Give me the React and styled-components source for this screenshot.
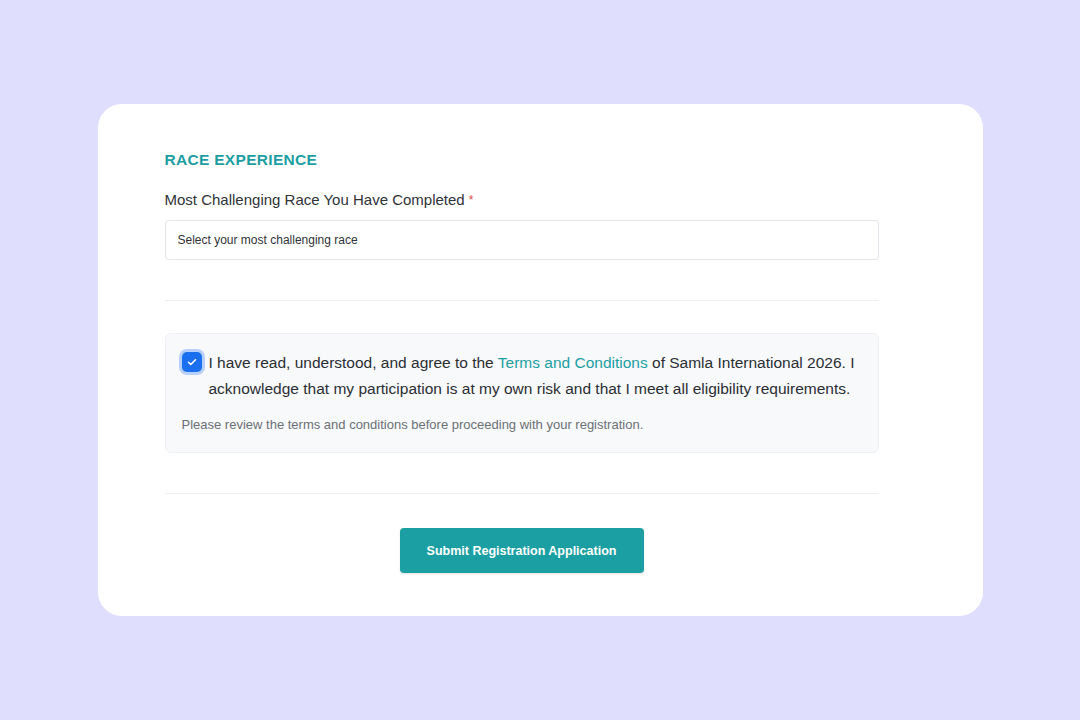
import styled, { createGlobalStyle } from 'styled-components'

const GlobalStyle = createGlobalStyle`
  html, body {
    margin: 0;
    padding: 0;
  }
  body {
    background: #dfdffd;
    font-family: 'Liberation Sans', Arial, sans-serif;
  }
  * {
    box-sizing: border-box;
  }
`

export default function App() {
  return (
    <>
      <GlobalStyle />
      <Page>
        <Card>
          <SectionTitle>Race Experience</SectionTitle>
          <Label>
            Most Challenging Race You Have Completed <Required>*</Required>
          </Label>
          <SelectBox>Select your most challenging race</SelectBox>
          <Divider />
          <TermsBox>
            <TermsRow>
              <CheckBox>
                <svg width="12" height="12" viewBox="0 0 24 24" fill="none">
                  <path
                    d="M5 12.5l4.5 4.5L19 7.5"
                    stroke="#fff"
                    strokeWidth="3.2"
                    strokeLinecap="round"
                    strokeLinejoin="round"
                  />
                </svg>
              </CheckBox>
              <TermsText>
                I have read, understood, and agree to the{' '}
                <TermsLink>Terms and Conditions</TermsLink> of Samla International
                2026. I acknowledge that my participation is at my own risk and
                that I meet all eligibility requirements.
              </TermsText>
            </TermsRow>
            <Hint>
              Please review the terms and conditions before proceeding with your
              registration.
            </Hint>
          </TermsBox>
          <Divider $last />
          <Actions>
            <SubmitButton>Submit Registration Application</SubmitButton>
          </Actions>
        </Card>
      </Page>
    </>
  )
}

const Page = styled.div`
  width: 1080px;
  height: 720px;
  display: flex;
  align-items: center;
  justify-content: center;
`

const Card = styled.div`
  width: 885px;
  background: #fff;
  border-radius: 24px;
  padding: 46px 104px 43px 67px;
  display: flex;
  flex-direction: column;
`

const SectionTitle = styled.h2`
  margin: 0 0 20px;
  font-size: 15.5px;
  font-weight: 700;
  letter-spacing: 0.3px;
  text-transform: uppercase;
  color: #1c9ea2;
  line-height: 20px;
`

const Label = styled.div`
  font-size: 15px;
  color: #2f3337;
  line-height: 20px;
  margin-bottom: 10px;
`

const Required = styled.span`
  color: #e04848;
  font-size: 12px;
  vertical-align: top;
`

const SelectBox = styled.div`
  height: 40px;
  border: 1px solid #e3e6ea;
  border-radius: 4px;
  padding: 0 12px;
  display: flex;
  align-items: center;
  font-size: 12px;
  color: #2f3337;
`

const Divider = styled.div`
  height: 1px;
  background: #eef0f3;
  margin: ${(p) => (p.$last ? '40px 0 34px' : '40px 0 32px')};
`

const TermsBox = styled.div`
  background: #f8f9fb;
  border: 1px solid #eef0f3;
  border-radius: 6px;
  padding: 16px 16px 18px;
`

const TermsRow = styled.div`
  display: flex;
  align-items: flex-start;
  gap: 7px;
`

const CheckBox = styled.span`
  flex: none;
  width: 20px;
  height: 20px;
  margin-top: 2px;
  border-radius: 5px;
  background: #1a6ff0;
  box-shadow: 0 0 0 3px #b7cffb;
  display: flex;
  align-items: center;
  justify-content: center;
`

const TermsText = styled.p`
  margin: 0;
  font-size: 15.5px;
  line-height: 26px;
  color: #2a2e33;
`

const TermsLink = styled.a`
  color: #1c9ea2;
  text-decoration: none;
`

const Hint = styled.p`
  margin: 14px 0 0;
  font-size: 13px;
  line-height: 18px;
  color: #6b7075;
`

const Actions = styled.div`
  display: flex;
  justify-content: center;
`

const SubmitButton = styled.button`
  width: 244px;
  height: 45px;
  border: none;
  border-radius: 4px;
  background: #1c9fa3;
  color: #fff;
  font-family: inherit;
  font-size: 12.5px;
  font-weight: 700;
  box-shadow: 0 1px 2px rgba(0, 0, 0, 0.12);
`
